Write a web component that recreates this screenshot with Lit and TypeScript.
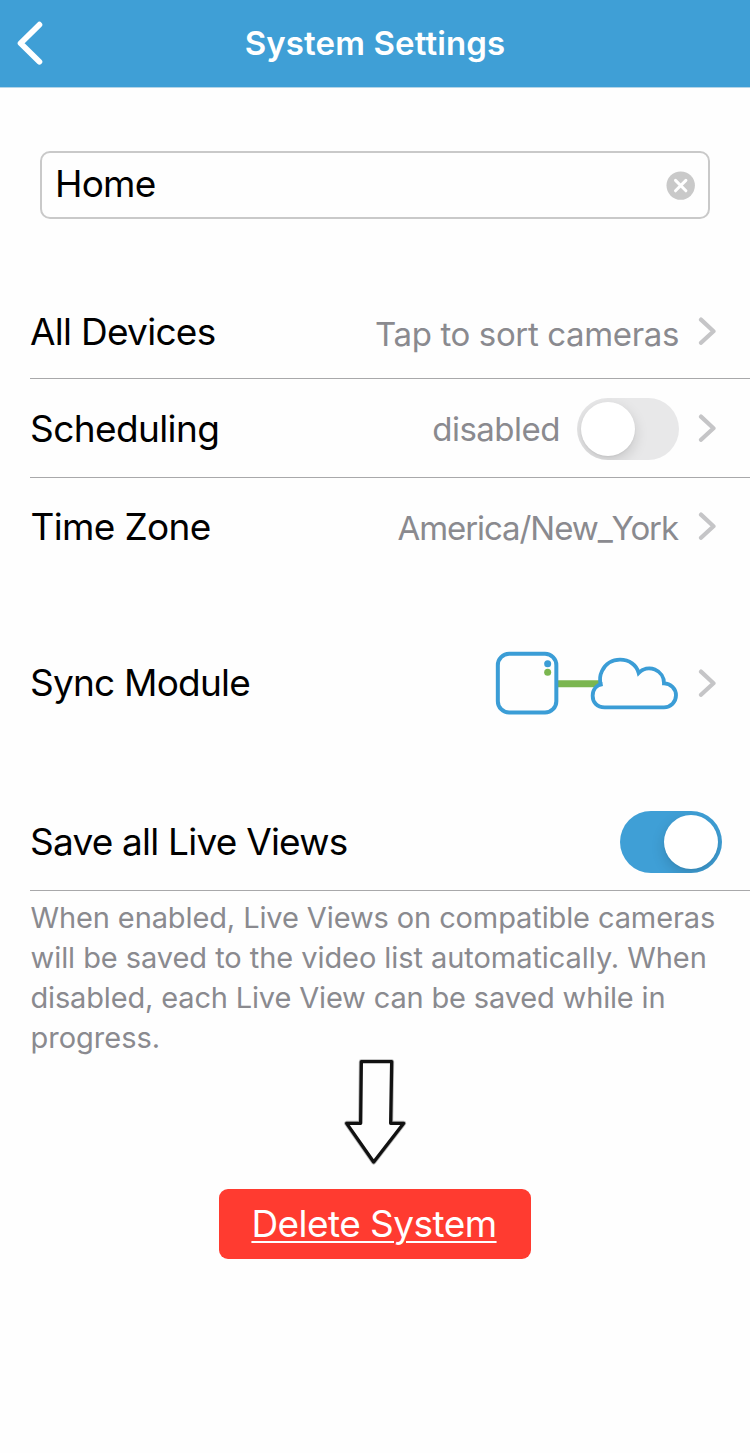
import { LitElement, html, css } from "lit";
import { customElement, property } from "lit/decorators.js";

@customElement("ui-chevron")
class UiChevron extends LitElement {
  static styles = css`
    :host { display: block; width: 18px; height: 28px; flex: none; }
    svg { display: block; }
  `;
  render() {
    return html`<svg width="18" height="28" viewBox="0 0 18 28" fill="none">
      <path d="M3 2.6 L15.5 14.2 L3 25.8" stroke="#c5c5c7" stroke-width="4.2" stroke-linecap="round" stroke-linejoin="round" />
    </svg>`;
  }
}

@customElement("ui-switch")
class UiSwitch extends LitElement {
  @property({ type: Boolean, reflect: true }) on = false;
  static styles = css`
    :host { display: flex; box-sizing: border-box; width: 102px; height: 62px; padding: 4px; border-radius: 31px; background: #e8e8e9; overflow: hidden; flex: none; }
    :host([on]) { background: #3f9fd6; justify-content: flex-end; }
    .knob { width: 54px; height: 54px; border-radius: 50%; background: #fff; box-shadow: 0 5px 14px rgba(0, 0, 0, 0.15), 0 1px 2px rgba(0, 0, 0, 0.05); }
  `;
  render() {
    return html`<div class="knob"></div>`;
  }
}

@customElement("app-root")
class AppRoot extends LitElement {
  static styles = css`
    :host { display: flex; flex-direction: column; box-sizing: border-box; width: 750px; height: 1453px; background: #fefefe; color: #000; font-family: Inter, "Liberation Sans", sans-serif; overflow: hidden; }
    svg { display: block; flex: none; }
    .bar { display: grid; grid-template-columns: 60px 1fr 60px; align-items: center; box-sizing: border-box; height: 88px; background: #3f9fd6; border-bottom: 1px solid #b5d5e8; }
    .bar svg { margin: 0 0 1px 14px; }
    .title { margin: 0 0 1px; text-align: center; font-size: 33px; line-height: 40px; font-weight: 600; color: #fff; letter-spacing: 0.13px; white-space: nowrap; }
    .field { display: flex; align-items: center; justify-content: space-between; box-sizing: border-box; height: 68px; margin: 63px 40px 0; padding: 0 12px 0 13px; border: 2px solid #c9c9c9; border-radius: 10px; }
    .name { font-size: 37px; line-height: 44px; margin-top: -2px; letter-spacing: -0.8px; }
    .group { display: flex; flex-direction: column; margin-left: 30px; }
    .main { margin-top: 64px; }
    .sync-group { margin-top: 61px; }
    .save-group { margin-top: 63px; }
    .row { display: flex; align-items: center; height: 96px; padding-right: 34px; }
    .row.first { height: 95px; }
    .row.mid { height: 98px; }
    .line { border-bottom: 1px solid #a8a8aa; }
    .label { flex: 1; font-size: 37px; line-height: 44px; white-space: nowrap; }
    .l1 { letter-spacing: -0.72px; margin-top: 2px; }
    .l2 { letter-spacing: -0.6px; margin-top: 1px; }
    .l3 { letter-spacing: -0.66px; margin: 1px 0 0 0.5px; }
    .l4 { letter-spacing: -0.78px; }
    .l5 { letter-spacing: -0.78px; }
    .value { font-size: 33px; line-height: 40px; color: #8a8a8f; white-space: nowrap; margin-right: 19px; }
    .v1 { letter-spacing: -0.36px; padding-top: 6px; }
    .v2 { letter-spacing: -0.5px; padding-top: 2px; margin-right: 17px; }
    .v3 { letter-spacing: -1.08px; padding-top: 4px; margin-right: 20px; }
    .row ui-switch { margin-right: 19px; }
    .row.mid ui-switch { margin-top: 1px; }
    .row.save { padding-right: 9px; }
    .sync-art { margin: 0 19px 2px 0; }
    .note { margin: 7px 0 0 0.5px; font-size: 29px; line-height: 40px; color: #8a8a8f; }
    .note span { display: block; white-space: nowrap; }
    .n1 { letter-spacing: -0.11px; }
    .n2 { letter-spacing: -0.06px; }
    .n3 { letter-spacing: -0.16px; }
    .arrow { align-self: center; margin-top: -3px; }
    .delete { align-self: center; display: block; box-sizing: border-box; width: 312px; height: 70px; margin-top: 24px; padding: 0 2px 0 0; border: 0; border-radius: 9px; background: #ff3b30; color: #fff; font: 400 37px/70px Inter, "Liberation Sans", sans-serif; letter-spacing: -0.55px; text-decoration: underline; text-decoration-thickness: 2px; text-underline-offset: 4px; white-space: nowrap; }
  `;
  render() {
    return html`
      <header class="bar">
        <svg width="32" height="48" viewBox="0 0 32 48" fill="none">
          <path d="M25.4 5.7 L6.6 24.3 L25.4 42.7" stroke="#fff" stroke-width="5.8" stroke-linecap="round" stroke-linejoin="round" />
        </svg>
        <h1 class="title">System Settings</h1>
      </header>
      <div class="field">
        <span class="name">Home</span>
        <svg width="30" height="30" viewBox="0 0 30 30">
          <circle cx="14.7" cy="15.6" r="14.2" fill="#c9c9c9" />
          <path d="M9.5 10.4 L19.9 20.8 M19.9 10.4 L9.5 20.8" stroke="#fff" stroke-width="3" stroke-linecap="round" />
        </svg>
      </div>
      <section class="group main">
        <div class="row first line"><span class="label l1">All Devices</span><span class="value v1">Tap to sort cameras</span><ui-chevron></ui-chevron></div>
        <div class="row mid line"><span class="label l2">Scheduling</span><span class="value v2">disabled</span><ui-switch></ui-switch><ui-chevron></ui-chevron></div>
        <div class="row"><span class="label l3">Time Zone</span><span class="value v3">America/New_York</span><ui-chevron></ui-chevron></div>
      </section>
      <section class="group sync-group">
        <div class="row"><span class="label l4">Sync Module</span>
          <svg class="sync-art" width="184" height="65" viewBox="45 59 552 195" fill="none">
            <path d="M230 160.5 H360" stroke="#7bb650" stroke-width="21" />
            <rect x="53.5" y="70.5" width="175.5" height="176" rx="34" fill="#fefefe" stroke="#3b9dd6" stroke-width="12" />
            <circle cx="203" cy="100.5" r="10.5" fill="#3b9dd6" />
            <circle cx="203" cy="126" r="10.5" fill="#7bb650" />
            <path d="M362 163 C358 146 360 134 366 122 C376 101 397 88 420 88 C448 88 470 104 476 128 A44 44 0 0 1 552 159 A36 36 0 0 1 552 231 H374 C350 231 338 215 338 196 C338 178 349 164 368 161" fill="#fefefe" stroke="#3b9dd6" stroke-width="11.5" />
          </svg>
          <ui-chevron></ui-chevron></div>
      </section>
      <section class="group save-group">
        <div class="row save line"><span class="label l5">Save all Live Views</span><ui-switch on></ui-switch></div>
        <p class="note"><span class="n1">When enabled, Live Views on compatible cameras</span><span class="n2">will be saved to the video list automatically. When</span><span class="n3">disabled, each Live View can be saved while in</span><span class="n4">progress.</span></p>
      </section>
      <svg class="arrow" width="64" height="110" viewBox="429 30 192 330">
        <path d="M484 50 H575 L572 235 H611 L521 351 L440 235 H482 Z" fill="#fefefe" stroke="#111" stroke-opacity=".3" stroke-width="15" stroke-linejoin="round" />
        <path d="M484 50 H575 L572 235 H611 L521 351 L440 235 H482 Z" fill="#fefefe" stroke="#111" stroke-width="10" stroke-linejoin="round" />
      </svg>
      <button class="delete">Delete System</button>
    `;
  }
}
